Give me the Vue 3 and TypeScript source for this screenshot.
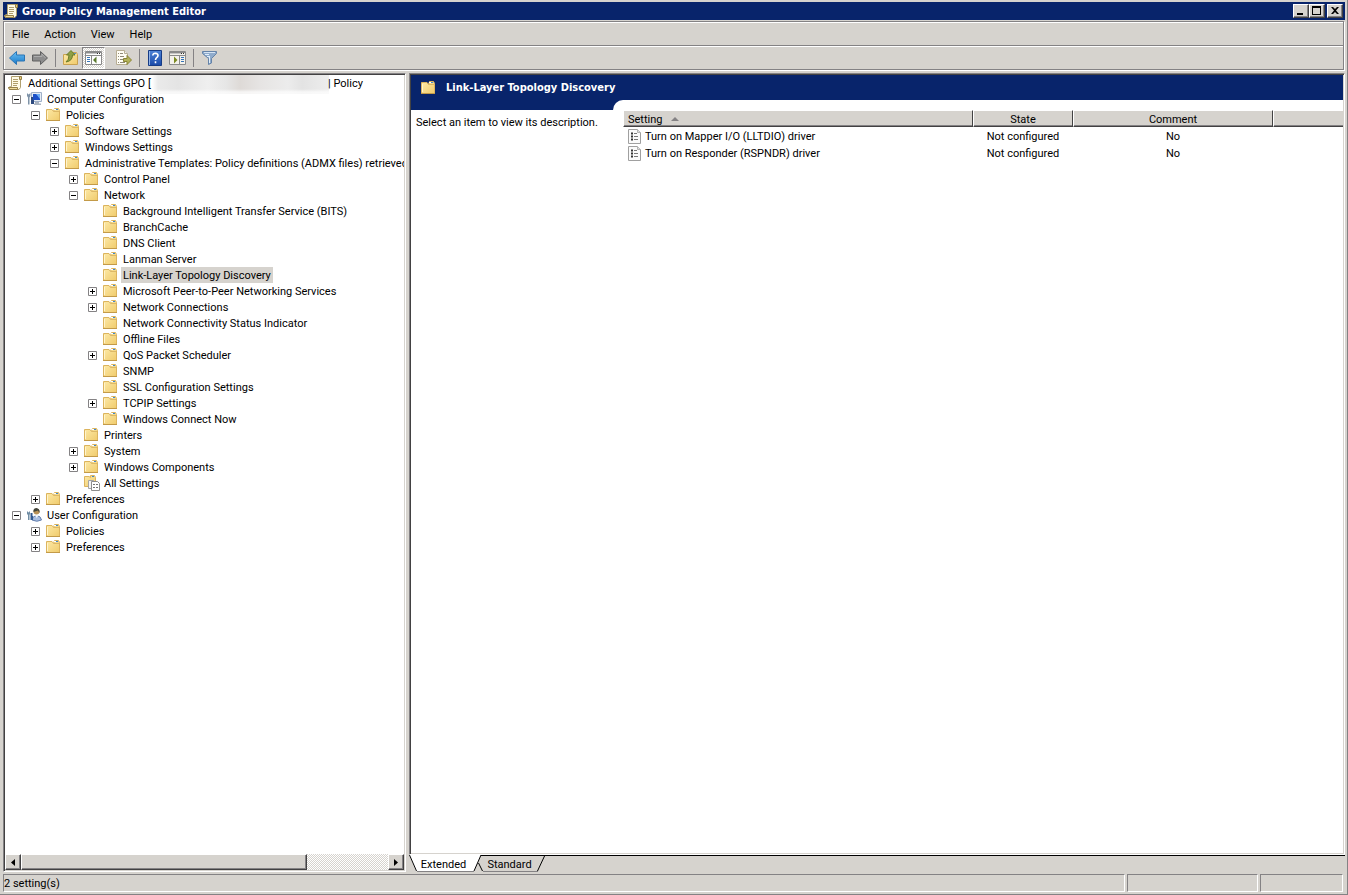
<script setup lang="ts">
import { ref } from 'vue'

type IconKind = 'gpo' | 'computer' | 'user' | 'folder' | 'all'

interface TreeNode {
  depth: number
  label: string
  icon: IconKind
  open?: boolean
}

interface PolicySetting {
  name: string
  state: string
  comment: string
}

const menus: string[] = ['File', 'Action', 'View', 'Help']

const nodes: TreeNode[] = [
  { depth: 1, label: 'Computer Configuration', icon: 'computer', open: true },
  { depth: 2, label: 'Policies', icon: 'folder', open: true },
  { depth: 3, label: 'Software Settings', icon: 'folder', open: false },
  { depth: 3, label: 'Windows Settings', icon: 'folder', open: false },
  { depth: 3, label: 'Administrative Templates: Policy definitions (ADMX files) retrieved from the local computer.', icon: 'folder', open: true },
  { depth: 4, label: 'Control Panel', icon: 'folder', open: false },
  { depth: 4, label: 'Network', icon: 'folder', open: true },
  { depth: 5, label: 'Background Intelligent Transfer Service (BITS)', icon: 'folder' },
  { depth: 5, label: 'BranchCache', icon: 'folder' },
  { depth: 5, label: 'DNS Client', icon: 'folder' },
  { depth: 5, label: 'Lanman Server', icon: 'folder' },
  { depth: 5, label: 'Link-Layer Topology Discovery', icon: 'folder' },
  { depth: 5, label: 'Microsoft Peer-to-Peer Networking Services', icon: 'folder', open: false },
  { depth: 5, label: 'Network Connections', icon: 'folder', open: false },
  { depth: 5, label: 'Network Connectivity Status Indicator', icon: 'folder' },
  { depth: 5, label: 'Offline Files', icon: 'folder' },
  { depth: 5, label: 'QoS Packet Scheduler', icon: 'folder', open: false },
  { depth: 5, label: 'SNMP', icon: 'folder' },
  { depth: 5, label: 'SSL Configuration Settings', icon: 'folder' },
  { depth: 5, label: 'TCPIP Settings', icon: 'folder', open: false },
  { depth: 5, label: 'Windows Connect Now', icon: 'folder' },
  { depth: 4, label: 'Printers', icon: 'folder' },
  { depth: 4, label: 'System', icon: 'folder', open: false },
  { depth: 4, label: 'Windows Components', icon: 'folder', open: false },
  { depth: 4, label: 'All Settings', icon: 'all' },
  { depth: 2, label: 'Preferences', icon: 'folder', open: false },
  { depth: 1, label: 'User Configuration', icon: 'user', open: true },
  { depth: 2, label: 'Policies', icon: 'folder', open: false },
  { depth: 2, label: 'Preferences', icon: 'folder', open: false },
]

const settings: PolicySetting[] = [
  { name: 'Turn on Mapper I/O (LLTDIO) driver', state: 'Not configured', comment: 'No' },
  { name: 'Turn on Responder (RSPNDR) driver', state: 'Not configured', comment: 'No' },
]

const selected = ref('Link-Layer Topology Discovery')

const indent = (node: TreeNode): string => `${node.depth * 19 - 12}px`
</script>

<template>
  <div class="window">
    <svg class="defs" width="0" height="0" aria-hidden="true">
      <defs>
        <linearGradient id="folder-face" x1="0" y1="0" x2="1" y2="1">
          <stop offset="0" stop-color="#fdeaa8" />
          <stop offset="1" stop-color="#f0cb6c" />
        </linearGradient>
        <linearGradient id="arrow-blue" x1="0" y1="0" x2="0" y2="1">
          <stop offset="0" stop-color="#6cc0f4" />
          <stop offset="1" stop-color="#1878c8" />
        </linearGradient>
        <linearGradient id="help-blue" x1="0" y1="0" x2="0" y2="1">
          <stop offset="0" stop-color="#4f84d8" />
          <stop offset="1" stop-color="#1a4aa8" />
        </linearGradient>
        <symbol id="i-folder" viewBox="0 0 16 16">
          <path d="M0.500 2.500H6L7.500 4.500L8.500 1.500H12.500L13.500 3.500V13.500H0.500Z" fill="url(#folder-face)" stroke="#dcb45e" />
          <path d="M8 2.500H10" stroke="#fff" />
          <path d="M10 2.500H12" stroke="#3f87cf" />
          <path d="M8 4.500H13" stroke="#dcb868" />
          <path d="M1.500 4V12" stroke="#fff4cc" />
          <path d="M0 13.500H14" stroke="#c39a48" />
        </symbol>
        <symbol id="i-gpo" viewBox="0 0 16 16">
          <path d="M3.500 1.500H12.500V12.500L11 14.500H1.500L0.500 12.500L2.500 11.500H3.500Z" fill="#fffbe6" stroke="#b0a070" />
          <path d="M11.500 1.500H13.500V4.500H11.500Z" fill="#e6cc7c" stroke="#96814a" />
          <path d="M0.500 12.500H9.500V14.500H1.500Z" fill="#f0dc9a" stroke="#96814a" />
          <path d="M5 4.500H10M5 6.500H10M5 8.500H10M5 10.500H9" stroke="#b09e6c" />
        </symbol>
        <symbol id="i-computer" viewBox="0 0 16 16">
          <path d="M4.500 1.500H14.500V10.500H4.500Z" fill="#e6ecf4" stroke="#9fb0c8" />
          <path d="M6 3H13V9H6Z" fill="#1c50c8" />
          <path d="M9 3H13V8Z" fill="#6cacf4" />
          <path d="M8 11H12V12.500H14V14H7V12.500H8Z" fill="#a9b3c1" />
          <path d="M0 2L1.500 3.500L3.500 2V5L2.500 6.500V13.500H1V6.500L0 5Z" fill="#7f93a8" />
          <path d="M4 6H6V9H7V13H4V9Z" fill="#2d4a80" />
        </symbol>
        <symbol id="i-user" viewBox="0 0 16 16">
          <path d="M5 13Q5.500 9 9.500 8.500Q14 9 14.500 13Q10 15.500 5 13Z" fill="#a8bee2" stroke="#6580ae" />
          <path d="M8 8L9.500 11L12 8Z" fill="#eef4fb" />
          <circle cx="9.500" cy="4.500" r="3" fill="#b99257" />
          <path d="M6.500 5Q6 1 9.500 1Q13 1.500 12.500 6L11 3.500Z" fill="#42453c" />
          <path d="M0 4L1.500 5.500L3 4V7L2.500 8V13H1V8L0 7Z" fill="#718da4" />
          <path d="M3.500 6H5.500V9H6V13H3.500Z" fill="#315990" />
        </symbol>
        <symbol id="i-all" viewBox="0 0 16 16">
          <path d="M0.500 1.500H5L6.500 2.500V0.500H10.500L11.500 2.500V11.500H0.500Z" fill="url(#folder-face)" stroke="#dcb45e" />
          <path d="M8 1.500H10" stroke="#3f87cf" />
          <path d="M4.500 5.500H9.500V13.500H4.500Z" fill="#f5f5f5" stroke="#a5a5a5" />
          <path d="M7.500 6.500H13.500L15.500 8.500V15.500H7.500Z" fill="#fff" stroke="#8d8d8d" />
          <path d="M9 9.500H11M12 9.500H14M9 12.500H11M12 12.500H14" stroke="#737373" />
        </symbol>
        <symbol id="i-policy" viewBox="0 0 13 15">
          <path d="M0.500 0.500H9.500L12.500 3.500V14.500H0.500Z" fill="#fafafa" stroke="#a0a0a0" />
          <path d="M9.500 0.500V3.500H12.500" fill="#e0e0e0" stroke="#b5b5b5" />
          <path d="M3 4.500H5M3 7.500H5M3 10.500H5" stroke="#333" stroke-width="2" />
          <path d="M6 4.500H9M6 7.500H10M6 10.500H10" stroke="#777" />
        </symbol>
      </defs>
    </svg>

    <header class="titlebar">
      <svg class="icon" width="16" height="16"><use href="#i-gpo" /></svg>
      <h1>Group Policy Management Editor</h1>
      <div class="caption">
        <button type="button" aria-label="Minimize">
          <svg width="12" height="10" viewBox="0 0 12 10"><path d="M2 7H8V9H2Z" /></svg>
        </button>
        <button type="button" aria-label="Maximize">
          <svg width="12" height="10" viewBox="0 0 12 10"><path fill-rule="evenodd" d="M1 0H10V9H1ZM2 2V8H9V2Z" /></svg>
        </button>
        <button type="button" class="close" aria-label="Close">
          <svg width="12" height="10" viewBox="0 0 12 10"><path d="M2 1H4L6 3L8 1H10L7 4.500L10 8H8L6 6L4 8H2L5 4.500Z" /></svg>
        </button>
      </div>
    </header>

    <div class="bars">
      <nav class="menubar" aria-label="Menu">
        <button v-for="menu in menus" :key="menu" type="button">{{ menu }}</button>
      </nav>
      <div class="toolbar" role="toolbar" aria-label="Standard toolbar">
        <button type="button" aria-label="Back">
          <svg width="16" height="16" viewBox="0 0 16 16"><path d="M0.500 8L7.500 1.500V5H15.500V11H7.500V14.500Z" fill="url(#arrow-blue)" stroke="#2a74b4" /></svg>
        </button>
        <button type="button" aria-label="Forward">
          <svg width="16" height="16" viewBox="0 0 16 16"><path d="M15.500 8L8.500 1.500V5H0.500V11H8.500V14.500Z" fill="#8c8c8c" stroke="#606060" /><path d="M2 6.500H10V4L13.500 8" fill="none" stroke="#adadad" /></svg>
        </button>
        <span class="sep"></span>
        <button type="button" aria-label="Up one level">
          <svg width="16" height="16" viewBox="0 0 16 16">
            <path d="M0.500 4.500H8L9 2.500H13.500L14.500 4.500V14.500H0.500Z" fill="url(#folder-face)" stroke="#c9a252" />
            <path d="M11 3.500H13" stroke="#4a94d8" />
            <path d="M3 12Q6 10 6 5H3.500L8 0.500L12 5H9.500Q9.500 11 3 12Z" fill="#8fa044" stroke="#6d7c2a" />
          </svg>
        </button>
        <button type="button" class="pressed" aria-label="Show or hide console tree" aria-pressed="true">
          <svg width="17" height="14" viewBox="0 0 17 14">
            <path d="M0.500 0.500H16.500V13.500H0.500Z" fill="#fff" stroke="#8a8a8a" />
            <path d="M1 1.500H16M1 4.500H16" stroke="#8a8a8a" />
            <path d="M1 2.500H12" stroke="#c6c6c6" /><path d="M12 2.500H13M14 2.500H15" stroke="#333" />
            <path d="M6.500 5V13" stroke="#8a8a8a" />
            <path d="M2 6.500H5M2 8.500H5M2 10.500H5" stroke="#3574b8" />
            <path d="M8 9L11.500 5.500V12.500Z" fill="#5a792d" />
          </svg>
        </button>
        <button type="button" class="export" aria-label="Export list">
          <svg width="16" height="16" viewBox="0 0 16 16">
            <path d="M0.500 0.500H8.500L11.500 3.500V14.500H0.500Z" fill="#fffdf4" stroke="#b8ae94" />
            <path d="M8.500 0.500V3.500H11.500" fill="#eee" stroke="#b8ae94" />
            <path d="M2 3.500H3M4 3.500H7M2 6.500H3M4 6.500H8M2 9.500H3M4 9.500H8M2 12.500H3M4 12.500H9" stroke="#908a78" />
            <path d="M7.500 8.500H11V5.500L15.500 10L11 14.500V11.500H7.500Z" fill="#b3b25a" stroke="#898434" />
          </svg>
        </button>
        <span class="sep"></span>
        <button type="button" aria-label="Help">
          <svg width="14" height="16" viewBox="0 0 14 16">
            <path d="M0.500 0.500H13.500V15.500H0.500Z" fill="url(#help-blue)" stroke="#163c86" />
            <path d="M1.500 1V15" stroke="#8fb2e8" />
            <path d="M4.800 5.500Q5 3.300 7.400 3.300Q10 3.500 10 5.500Q10 6.800 8.700 7.700Q7.600 8.500 7.500 10M7.500 11.300V13.200" fill="none" stroke="#fff" stroke-width="1.600" />
          </svg>
        </button>
        <button type="button" aria-label="Show or hide action pane">
          <svg width="17" height="14" viewBox="0 0 17 14">
            <path d="M0.500 0.500H16.500V13.500H0.500Z" fill="#f4f2ec" stroke="#8a8a8a" />
            <path d="M1 1.500H16M1 4.500H16" stroke="#8a8a8a" />
            <path d="M1 2.500H12" stroke="#c6c6c6" /><path d="M12 2.500H13M14 2.500H15" stroke="#333" />
            <path d="M10.500 5V13" stroke="#8a8a8a" />
            <path d="M12 6.500H15M12 8.500H15M12 10.500H15" stroke="#3574b8" />
            <path d="M8.500 9L5 5.500V12.500Z" fill="#7c8a22" />
          </svg>
        </button>
        <span class="sep"></span>
        <button type="button" aria-label="Filter">
          <svg width="16" height="16" viewBox="0 0 16 16">
            <path d="M1.500 1.500H15.500V3.500L10.500 8.500V13L7.500 14.500V8.500L1.500 3.500Z" fill="#8fabcc" stroke="#6583a8" />
            <path d="M3 2.500H14" stroke="#d5e3f3" />
            <path d="M4 4.500H8M6 6.500H9" stroke="#e0edfa" />
            <path d="M8.500 6V13" stroke="#e0edfa" />
          </svg>
        </button>
      </div>
    </div>

    <main class="panes">
      <section class="pane tree-pane" aria-label="Console tree">
        <ul class="tree" role="tree">
          <li class="node root" role="treeitem">
            <svg class="icon" width="16" height="16"><use href="#i-gpo" /></svg>
            <span class="label">Additional Settings GPO [</span>
            <span class="redacted"></span>
            <span class="label policy">| Policy</span>
          </li>
          <li
            v-for="(node, index) in nodes"
            :key="index"
            class="node"
            role="treeitem"
            :aria-selected="node.label === selected"
            :style="{ paddingLeft: indent(node) }"
          >
            <button v-if="node.open !== undefined" type="button" class="expander" :aria-label="node.open ? 'Collapse' : 'Expand'">
              <svg width="9" height="9" viewBox="0 0 9 9">
                <path d="M0.500 0.500H8.500V8.500H0.500Z" fill="#fff" stroke="#848284" />
                <path d="M2 4.500H7" stroke="#000" />
                <path v-if="!node.open" d="M4.500 2V7" stroke="#000" />
              </svg>
            </button>
            <span v-else class="expander"></span>
            <svg class="icon" width="16" height="16"><use :href="`#i-${node.icon}`" /></svg>
            <span class="label" :class="{ selected: node.label === selected }" @click="selected = node.label">{{ node.label }}</span>
          </li>
        </ul>
        <div class="scrollbar">
          <button type="button" aria-label="Scroll left"><svg width="4" height="7" viewBox="0 0 4 7"><path d="M4 0V7L0 3.500Z" /></svg></button>
          <div class="track"><div class="thumb"></div></div>
          <button type="button" aria-label="Scroll right"><svg width="4" height="7" viewBox="0 0 4 7"><path d="M0 0V7L4 3.500Z" /></svg></button>
        </div>
      </section>

      <div class="result">
        <section class="pane result-pane" aria-label="Result">
          <header class="banner">
            <svg class="icon" width="16" height="16"><use href="#i-folder" /></svg>
            <h2>{{ selected }}</h2>
          </header>
          <div class="body">
            <aside class="description">Select an item to view its description.</aside>
            <div class="list-frame">
              <div class="list">
                <table>
                  <colgroup>
                    <col class="c-setting" /><col class="c-state" /><col class="c-comment" /><col />
                  </colgroup>
                  <thead>
                    <tr>
                      <th class="first" scope="col">Setting <svg width="8" height="4" viewBox="0 0 8 4"><path d="M4 0L8 4H0Z" fill="#848284" /></svg></th>
                      <th scope="col">State</th>
                      <th scope="col">Comment</th>
                      <td class="rest"></td>
                    </tr>
                  </thead>
                  <tbody>
                    <tr v-for="item in settings" :key="item.name">
                      <td>
                        <div class="item">
                          <svg width="13" height="15"><use href="#i-policy" /></svg>{{ item.name }}
                        </div>
                      </td>
                      <td class="mid">{{ item.state }}</td>
                      <td class="mid">{{ item.comment }}</td>
                      <td></td>
                    </tr>
                  </tbody>
                </table>
              </div>
            </div>
          </div>
        </section>
        <div class="tabs" role="tablist">
          <button type="button" role="tab" aria-selected="true" class="tab extended">
            <svg width="74" height="17" viewBox="0 0 74 17">
              <path d="M0 0H72L65 16H7Z" fill="#fff" />
              <path d="M0.500 0L7.500 16M65 16L72 0" fill="none" stroke="#000" />
              <path d="M8 16.500H65" stroke="#848284" />
            </svg>
            <span>Extended</span>
          </button>
          <button type="button" role="tab" aria-selected="false" class="tab standard">
            <svg width="68" height="17" viewBox="0 0 68 17">
              <path d="M0.500 8L4.500 16M59.500 16L67 0" fill="none" stroke="#000" />
              <path d="M5 16.500H60" stroke="#848284" />
            </svg>
            <span>Standard</span>
          </button>
        </div>
      </div>
    </main>

    <footer class="status">
      <span class="cell grow">2 setting(s)</span>
      <span class="cell medium"></span>
      <span class="cell small"></span>
    </footer>
  </div>
</template>

<style>
html,
body,
#app {
  height: 100%;
}

body {
  margin: 0;
  background: #d6d3ce;
}
</style>

<style scoped>
.window {
  box-sizing: border-box;
  display: flex;
  flex-direction: column;
  min-height: 100%;
  padding: 2px 2px 2px 3px;
  border-right: 1px solid #848284;
  border-bottom: 1px solid #848284;
  background: #d6d3ce;
  color: #000;
  font: 11px/16px Roboto, "DejaVu Sans Condensed", sans-serif;
  white-space: nowrap;
}

.defs {
  position: absolute;
}

button {
  padding: 0;
  border: 0;
  background: none;
  color: inherit;
  font: inherit;
}

svg {
  display: block;
  flex: none;
}

.titlebar {
  display: flex;
  align-items: center;
  height: 18px;
  padding: 0 2px 0 1px;
  background: #08246b;
  color: #fff;
}

.titlebar h1,
.banner h2 {
  margin: 0;
  font: bold 11px/18px "DejaVu Sans Condensed", "DejaVu Sans", sans-serif;
}

.titlebar h1 {
  flex: 1;
  margin-left: 2px;
  line-height: 16px;
  padding-top: 2px;
}

.caption {
  display: flex;
}

.caption button,
.scrollbar button,
.thumb {
  box-sizing: border-box;
  border: 1px solid;
  border-color: #fff #424142 #424142 #fff;
  background: #d6d3ce;
  box-shadow: inset -1px -1px #848284;
}

.caption button {
  width: 16px;
  height: 14px;
  padding: 1px;
}

.caption .close {
  margin-left: 2px;
}

.bars {
  margin: 1px 1px 2px 0;
  border: 1px solid #848284;
  box-shadow: inset 1px 1px #fff, 1px 1px #fff;
}

.menubar {
  display: flex;
  align-items: center;
  gap: 15px;
  height: 23px;
  padding-left: 8px;
  border-bottom: 1px solid #848284;
}

.menubar button {
  padding-top: 2px;
}

.toolbar {
  display: flex;
  align-items: center;
  height: 23px;
  padding-left: 1px;
  box-shadow: inset 0 1px #fff;
}

.toolbar button {
  display: flex;
  align-items: center;
  justify-content: center;
  width: 23px;
  height: 22px;
}

.toolbar .pressed {
  box-sizing: border-box;
  border: 1px solid;
  border-color: #848284 #fff #fff #848284;
  background: repeating-conic-gradient(#fff 0 25%, #d6d3ce 0 50%) 0 0 / 2px 2px;
}

.toolbar .export {
  margin-left: 7px;
}

.sep {
  width: 1px;
  height: 18px;
  margin: 0 3px 0 4px;
  background: #848284;
}

.panes {
  display: flex;
  flex: 1;
  margin-top: 1px;
  min-height: 0;
}

.pane {
  box-sizing: border-box;
  display: flex;
  flex-direction: column;
  padding: 1px;
  border: 1px solid;
  border-color: #848284 #fff #fff #848284;
  background: #fff;
  box-shadow: inset 1px 1px #424142, inset -1px -1px #d6d3ce;
}

.tree-pane {
  flex: none;
  width: 403px;
}

.tree {
  flex: 1;
  margin: 0;
  padding: 0;
  overflow: hidden;
  list-style: none;
}

.node {
  display: flex;
  align-items: center;
  height: 16px;
}

.root {
  position: relative;
  padding-left: 3px;
}

.expander {
  flex: none;
  width: 9px;
  margin-right: 6px;
}

.label {
  height: 16px;
  margin-left: 2px;
  padding: 0 2px;
  line-height: 18px;
}

.label.selected {
  background: #d6d3ce;
}

.redacted {
  position: absolute;
  top: 0;
  left: 147px;
  width: 177px;
  height: 19px;
  background:
    linear-gradient(to bottom, transparent 14px, #fffb 17px),
    linear-gradient(to right, #fff, #eaeaea 6px, #e4e4e4 26px, #efefef 56px, #e6e6e6 74px, #dedad7 88px, #e6e4e3 108px, #ececec 136px, #e3e3e3 150px, #ededed);
}

.policy {
  position: absolute;
  left: 319px;
}

.scrollbar {
  display: flex;
  height: 16px;
}

.scrollbar button {
  display: flex;
  align-items: center;
  justify-content: center;
  width: 16px;
}

.track {
  flex: 1;
  background: repeating-conic-gradient(#fff 0 25%, #d6d3ce 0 50%) 0 0 / 2px 2px;
}

.thumb {
  width: 78%;
  height: 16px;
}

.result {
  display: flex;
  flex: 1;
  flex-direction: column;
  margin-left: 3px;
  min-width: 0;
}

.result-pane {
  flex: 1;
}

.banner {
  display: flex;
  align-items: center;
  height: 25px;
  padding-left: 10px;
  background: #08246b;
  color: #fff;
}

.banner h2 {
  margin-left: 9px;
}

.body {
  display: flex;
  flex: 1;
}

.description {
  box-sizing: border-box;
  width: 202px;
  flex: none;
  padding: 5px;
  border-top: 10px solid #08246b;
}

.list-frame {
  flex: 1;
  min-width: 0;
  background: linear-gradient(#08246b 10px, #fff 10px);
}

.list {
  box-sizing: border-box;
  height: 100%;
  padding: 10px 0 0 10px;
  border-top-left-radius: 10px;
  background: #fff;
}

table {
  width: 100%;
  border-collapse: separate;
  border-spacing: 0;
  table-layout: fixed;
}

.c-setting {
  width: 350px;
}

.c-state {
  width: 100px;
}

.c-comment {
  width: 200px;
}

th,
.rest {
  box-sizing: border-box;
  height: 17px;
  padding: 2px 0 0;
  border: 1px solid;
  border-color: #fff #424142 #424142 #fff;
  background: #d6d3ce;
  box-shadow: inset 0 -1px #848284;
  line-height: 13px;
  font-weight: normal;
}

.rest {
  border-right: 0;
}

th.first {
  padding-left: 4px;
  text-align: left;
}

th svg {
  display: inline-block;
  margin-left: 6px;
  vertical-align: 2px;
}

tbody td {
  padding: 2px 0 0;
  line-height: 15px;
}

.item {
  display: flex;
  align-items: center;
  gap: 4px;
  padding-left: 5px;
}

.mid {
  text-align: center;
}

.tabs {
  display: flex;
  height: 17px;
  background: linear-gradient(#000, #000) 72px 0 / 100% 1px no-repeat;
}

.tab {
  position: relative;
  height: 17px;
  padding-top: 2px;
  line-height: 15px;
}

.tab svg {
  position: absolute;
  top: 0;
  left: 0;
}

.tab span {
  position: relative;
}

.extended {
  width: 69px;
}

.standard {
  width: 63px;
}

.status {
  display: flex;
  gap: 2px;
  margin-top: 2px;
  padding-right: 2px;
}

.cell {
  box-sizing: border-box;
  height: 18px;
  border: 1px solid;
  border-color: #848284 #fff #fff #848284;
  line-height: 18px;
}

.grow {
  flex: 1;
}

.medium {
  width: 131px;
}

.small {
  width: 83px;
}
</style>
